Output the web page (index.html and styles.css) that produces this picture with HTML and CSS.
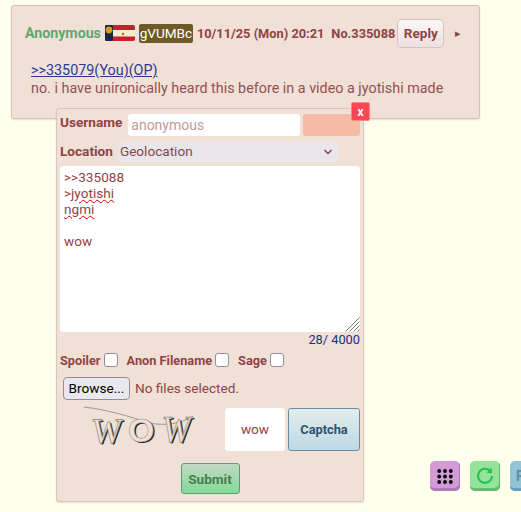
FILE: index.html
```html
<!DOCTYPE html>
<html lang="en">
<head>
<meta charset="utf-8">
<title>Reply</title>
<link rel="stylesheet" href="styles.css">
</head>
<body>
<article class="post">
  <header class="post-head">
    <span class="name">Anonymous</span>
    <svg class="flag" width="30" height="16" viewBox="0 0 30 16">
      <rect width="30" height="16" rx="2" fill="#c8202c"/>
      <rect x="8" y="5" width="22" height="6.5" fill="#f4ecd2"/>
      <rect width="8" height="16" rx="1.5" fill="#14264e"/>
      <circle cx="4" cy="5" r="3.4" fill="#d79a1a"/>
      <circle cx="18" cy="9" r="1.3" fill="#e8502a"/>
    </svg>
    <span class="uid">gVUMBc</span>
    <span class="date">10/11/25 (Mon) 20:21</span>
    <span class="num">No.335088</span>
    <button class="reply" type="button">Reply</button>
    <span class="caret">▸</span>
  </header>
  <div class="post-body">
    <a class="quote" href="#">&gt;&gt;335079(You)(OP)</a>
    <p class="msg">no. i have unironically heard this before in a video a jyotishi made</p>
  </div>
</article>

<form class="qr">
  <button class="close" type="button">x</button>
  <div class="row user-row">
    <label class="lbl lbl-up">Username</label>
    <input class="user" type="text" placeholder="anonymous">
    <span class="swatch"></span>
  </div>
  <div class="row loc-row">
    <label class="lbl">Location</label>
    <div class="select">
      <span>Geolocation</span>
      <svg width="10" height="6" viewBox="0 0 10 6"><path d="M1.5 1 5 4.5 8.5 1" fill="none" stroke="#8b3d40" stroke-width="1.3"/></svg>
    </div>
  </div>
  <div class="area">
    <div class="line">&gt;&gt;335088</div>
    <div class="line">&gt;<span class="sp">jyotishi</span></div>
    <div class="line"><span class="sp">ngmi</span></div>
    <div class="line">&nbsp;</div>
    <div class="line">wow</div>
    <svg class="grip" width="15" height="15" viewBox="0 0 15 15"><path d="M14.5 .5 .5 14.5M14.5 4.5 4.5 14.5M14.5 8.5 8.5 14.5M14.5 12.5 12.5 14.5" stroke="#777" stroke-width="1" fill="none"/></svg>
  </div>
  <div class="count">28/ 4000</div>
  <div class="checks">
    <label class="chk">Spoiler<span class="box"></span></label>
    <label class="chk">Anon Filename<span class="box"></span></label>
    <label class="chk">Sage<span class="box"></span></label>
  </div>
  <div class="file">
    <button class="browse" type="button">Browse...</button>
    <span>No files selected.</span>
  </div>
  <div class="cap-row">
    <svg class="cap-img" width="128" height="46" viewBox="0 0 128 46">
      <path d="M15 1C40 4 62 11 80 17C95 20 112 18 124 10" fill="none" stroke="#999" stroke-width="1"/>
      <text class="cap-shadow" transform="translate(23.5 37.5) skewX(-4) scale(1.25 1.5)">w</text>
      <text class="cap-letter" transform="translate(22 37) skewX(-4) scale(1.25 1.5)">w</text>
      <text class="cap-shadow cap-o" transform="translate(60.5 36.5)">O</text>
      <text class="cap-letter cap-o" transform="translate(59 36)">O</text>
      <text class="cap-shadow" transform="translate(93.5 36.5) skewX(-6) scale(1.2 1.6)">w</text>
      <text class="cap-letter" transform="translate(92 36) skewX(-6) scale(1.2 1.6)">w</text>
    </svg>
    <div class="cap-input">wow</div>
    <button class="cap-btn" type="button">Captcha</button>
  </div>
  <div class="submit-row">
    <button class="submit" type="button">Submit</button>
  </div>
</form>

<nav class="dock">
  <button class="dock-btn purple" type="button" aria-label="Menu">
    <svg width="16" height="15" viewBox="0 0 16 15" fill="#000">
      <circle cx="2.2" cy="2" r="1.9"/><circle cx="8" cy="2" r="1.9"/><circle cx="13.8" cy="2" r="1.9"/>
      <circle cx="2.2" cy="7.5" r="1.9"/><circle cx="8" cy="7.5" r="1.9"/><circle cx="13.8" cy="7.5" r="1.9"/>
      <circle cx="2.2" cy="13" r="1.9"/><circle cx="8" cy="13" r="1.9"/><circle cx="13.8" cy="13" r="1.9"/>
    </svg>
  </button>
  <button class="dock-btn green" type="button" aria-label="Refresh">
    <svg width="18" height="18" viewBox="0 0 18 18"><path d="M14.5 4.5A7 7 0 1 0 16 9" fill="none" stroke="#22c24a" stroke-width="2"/><path d="M10.5 5.8 16 6.3 15.6 .8Z" fill="#22c24a"/></svg>
  </button>
  <button class="dock-btn blue" type="button">R</button>
</nav>
</body>
</html>
```
FILE: styles.css
```css
* { box-sizing: border-box; }
html, body { height: 100%; }
body {
  margin: 0;
  padding: 5px 0 0 11px;
  background: #ffffec;
  color: #8f4446;
  font: 13.6px/17px Roboto, sans-serif;
  overflow: hidden;
}
button { font-family: Roboto, sans-serif; }

.post {
  width: 469px;
  height: 114px;
  background: #f0e0d6;
  border: 1px solid #d9bfb7;
  border-radius: 3px;
  box-shadow: 0 1px 2px rgba(0,0,0,.12);
  padding: 13px 13px 0 13px;
}
.post-head { display: flex; align-items: center; height: 28px; white-space: nowrap; }
.name { color: #64a76a; font-weight: 700; font-size: 14.2px; }
.flag { margin-left: 4px; flex: none; }
.uid {
  flex: none;
  margin-left: 4px;
  width: 54px;
  height: 19px;
  line-height: 19px;
  text-align: center;
  background: #6f5a27;
  color: #fff;
  border-radius: 2px;
  font-size: 13.6px;
}
.date, .num { flex: none; font-weight: 700; font-size: 12.8px; }
.date { margin-left: 4px; }
.num { margin-left: 7px; }
.reply {
  flex: none;
  margin-left: 2px;
  width: 47px;
  height: 29px;
  padding: 0;
  color: #8f4446;
  font-size: 13.6px;
  font-weight: 700;
  background: linear-gradient(#fbf7f6, #eddfdf);
  border: 1px solid #d8c3c3;
  border-radius: 5px;
}
.caret { margin-left: 11px; font-size: 11px; }
.post-body { margin-top: 15px; padding-left: 6px; line-height: 18px; font-size: 14.35px; }
.quote { display: block; color: #2b3a98; text-decoration: underline; }
.msg { margin: 0; color: #955053; }

.qr {
  position: absolute;
  left: 56px;
  top: 108px;
  width: 308px;
  height: 394px;
  background: #f0e0d6;
  border: 1px solid #d9c6bd;
  border-radius: 3px;
  box-shadow: 0 1px 2px rgba(0,0,0,.12);
  padding: 4px 3px 0;
}
.close {
  position: absolute;
  right: -7px;
  top: -7px;
  width: 19px;
  height: 19px;
  padding: 0;
  background: #fb4654;
  color: #fff;
  font-size: 12px;
  font-weight: 700;
  line-height: 16px;
  border: 1px solid #f08a8a;
  border-radius: 2px;
}
.row { display: flex; align-items: center; }
.lbl { font-weight: 700; }
.lbl-up { align-self: flex-start; margin-top: 1px; }
.user-row { height: 23px; }
.user {
  margin-left: 6px;
  width: 172px;
  height: 22px;
  padding: 0 3px;
  border: 0;
  border-radius: 3px;
  background: #fff;
  font: 14px Roboto, sans-serif;
}
.user::placeholder { color: #c09a9a; opacity: 1; }
.swatch {
  margin-left: 3px;
  width: 57px;
  height: 22px;
  background: #f5bba5;
  border-radius: 3px;
}
.loc-row { margin-top: 5px; height: 21px; }
.select {
  width: 220px;
  height: 20px;
  margin-left: 5px;
  padding: 0 5px 0 2px;
  background: #e8e6ea;
  border-radius: 3px;
  display: flex;
  align-items: center;
  justify-content: space-between;
}
.area {
  position: relative;
  margin-top: 4px;
  width: 300px;
  height: 166px;
  padding: 3px 4px;
  background: #fff;
  border-radius: 4px;
  line-height: 16px;
}
.sp { text-decoration: underline wavy #e00000 1.2px; text-underline-offset: 1px; }
.grip { position: absolute; right: 0; bottom: 0; }
.count { text-align: right; width: 300px; height: 15px; line-height: 15px; color: #24307c; font-size: 12.8px; }
.checks { display: flex; margin-top: 4px; height: 18px; align-items: center; font-weight: 700; font-size: 12.75px; }
.chk { display: flex; align-items: center; margin-right: 9px; }
.chk:last-child { margin-right: 0; }
.box {
  margin-left: 3px;
  width: 14px;
  height: 14px;
  background: #fff;
  border: 1px solid #8f8f9d;
  border-radius: 3px;
}
.file { display: flex; align-items: center; margin-top: 7px; padding-left: 3px; height: 24px; }
.browse {
  width: 67px;
  height: 23px;
  padding: 0;
  margin-right: 5px;
  color: #000;
  font-size: 13.6px;
  background: #e9e9ed;
  border: 1px solid #8f8f9d;
  border-radius: 4px;
}
.cap-row { display: flex; align-items: center; margin-top: 7px; height: 44px; }
.cap-img { flex: none; width: 128px; height: 46px; margin-left: 9px; overflow: hidden; }
.cap-letter, .cap-shadow { font: 400 34px "Liberation Serif", serif; }
.cap-o { font: 700 34px "Liberation Sans", sans-serif; }
.cap-letter { fill: #f0e0d6; stroke: #888; stroke-width: .5; }
.cap-shadow { fill: #222; }
.cap-input {
  margin-left: 28px;
  width: 60px;
  height: 43px;
  line-height: 43px;
  text-align: center;
  background: #fff;
  border-radius: 3px;
}
.cap-btn {
  margin-left: 3px;
  width: 72px;
  height: 43px;
  padding: 0;
  color: #2d536f;
  font-size: 12.8px;
  font-weight: 700;
  background: linear-gradient(#e4ecec, #bcd9e6);
  border: 1px solid #6a8aa3;
  border-radius: 3px;
}
.submit-row { display: flex; justify-content: center; margin-top: 12px; }
.submit {
  width: 59px;
  height: 31px;
  padding: 0;
  color: #4b7c53;
  font-size: 13.6px;
  font-weight: 700;
  background: linear-gradient(#c3d8c3, #7fdc98);
  border: 1px solid #5e9a72;
  border-radius: 3px;
}

.dock {
  position: fixed;
  left: 430px;
  top: 461px;
  display: flex;
  gap: 10px;
}
.dock-btn {
  flex: none;
  width: 30px;
  height: 30px;
  padding: 0;
  border: 0;
  border-radius: 5px;
  display: flex;
  align-items: center;
  justify-content: center;
  font-size: 14px;
  font-weight: 700;
}
.purple { background: #d49ad8; box-shadow: inset -1px -3px 0 #b07ab8; }
.green { background: #94e29c; box-shadow: inset -1px -3px 0 #62bd72; }
.blue { background: #92c4d6; color: #5a8eb0; box-shadow: inset -1px -3px 0 #6a9cc0; justify-content: flex-start; padding-left: 6px; }
```
